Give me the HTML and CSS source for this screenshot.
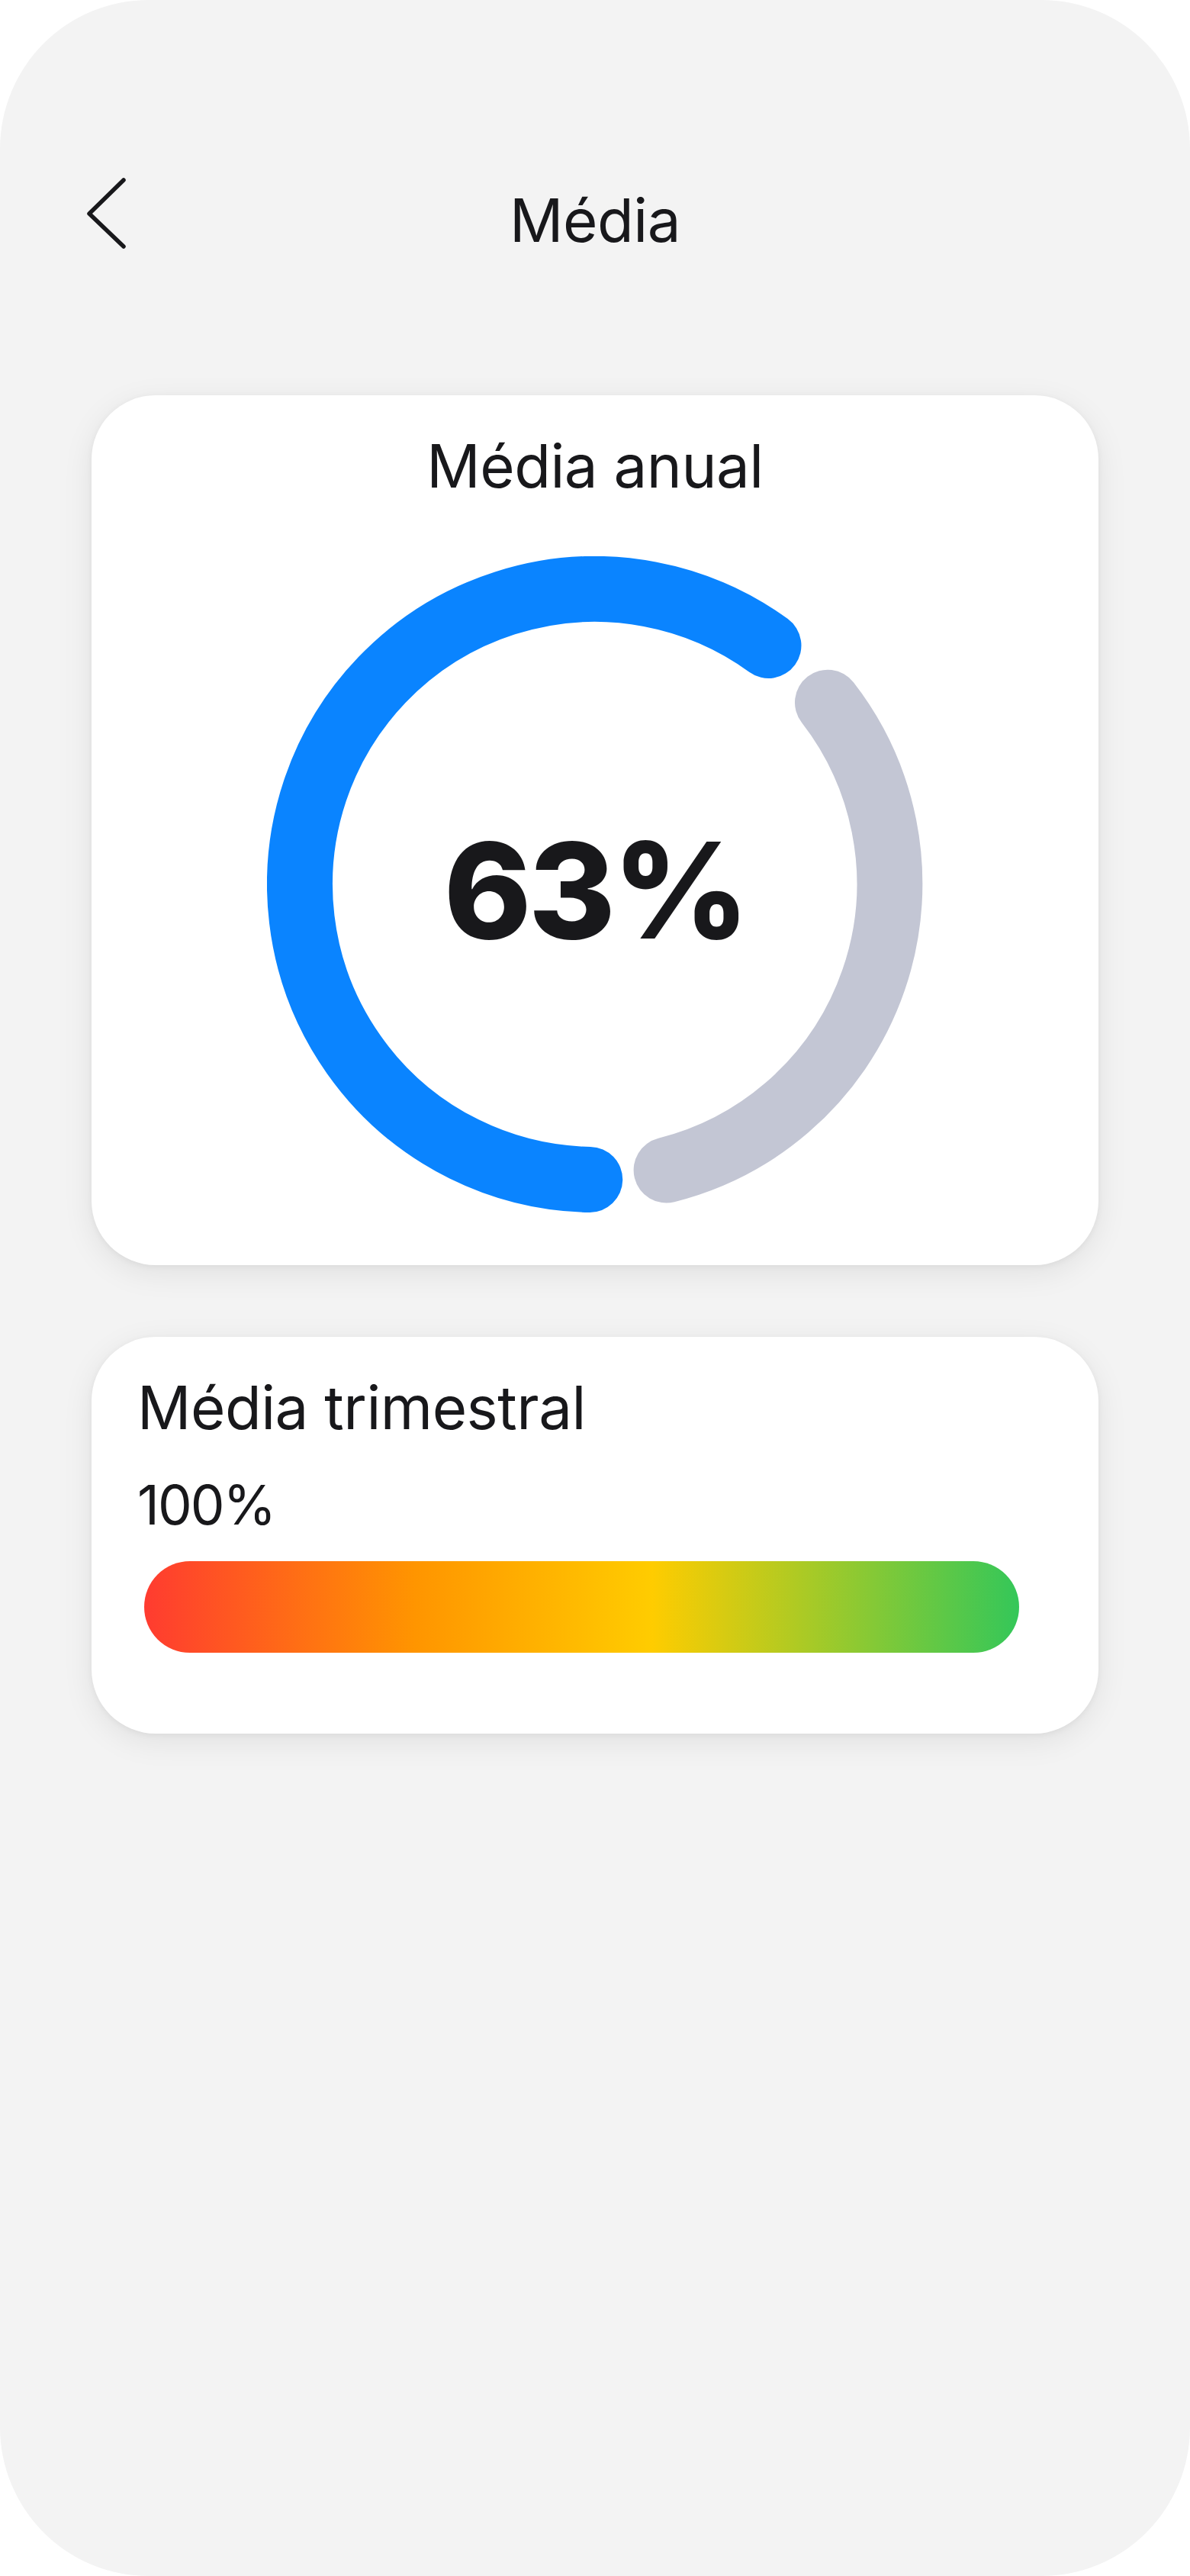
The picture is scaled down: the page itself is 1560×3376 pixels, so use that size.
FILE: index.html
```html
<!DOCTYPE html>
<html lang="pt">
<head>
<meta charset="utf-8">
<title>Média</title>
<link rel="stylesheet" href="styles.css">
</head>
<body>
<div class="phone">
  <header class="topbar">
    <button class="back" aria-label="Voltar">
      <svg class="back-icon" width="56" height="96" viewBox="0 0 56 96"><polyline points="50,4 5,48 50,91" fill="none" stroke="#18181b" stroke-width="5.5" stroke-linecap="round" stroke-linejoin="round"/></svg>
    </button>
    <h1 class="topbar-title">Média</h1>
    <span class="topbar-spacer"></span>
  </header>

  <main class="content">
    <section class="card card-annual">
      <h2 class="card-title centered">Média anual</h2>
      <div class="ring">
        <svg class="ring-svg" width="860" height="860" viewBox="0 0 860 860">
          <path d="M 423.25 816.94 A 387 387 0 1 1 657.47 116.91" fill="none" stroke="#0a84ff" stroke-width="86" stroke-linecap="round"/>
          <path d="M 734.96 191.74 A 387 387 0 0 1 523.62 804.51" fill="none" stroke="#c3c6d4" stroke-width="86" stroke-linecap="round"/>
        </svg>
        <div class="ring-value">63%</div>
      </div>
    </section>

    <section class="card card-quarter">
      <h2 class="card-title">Média trimestral</h2>
      <div class="quarter-value">100%</div>
      <div class="bar"></div>
    </section>
  </main>
</div>
</body>
</html>
```
FILE: styles.css
```css
* { box-sizing: border-box; }
html, body { margin: 0; padding: 0; background: #ffffff; }
body { font-family: Inter, "Liberation Sans", sans-serif; color: #18181b; }

.phone {
  width: 1560px;
  height: 3376px;
  background: #f3f3f3;
  border-radius: 195px;
  overflow: hidden;
  padding-top: 239px;
}

.topbar {
  display: grid;
  grid-template-columns: 1fr auto 1fr;
  align-items: center;
  height: 100px;
}
.back {
  justify-self: start;
  align-self: start;
  margin-top: -7px;
  margin-left: 112px;
  padding: 0;
  border: 0;
  background: none;
  width: 56px;
  height: 96px;
}
.back-icon { display: block; }
.topbar-title {
  margin: 0;
  font-size: 78px;
  line-height: 1;
  font-weight: 400;
  letter-spacing: -0.5px;
}

.content {
  display: flex;
  flex-direction: column;
  gap: 94px;
  padding: 179px 120px 0;
}

.card {
  background: #ffffff;
  border-radius: 84px;
  box-shadow: 0 10px 40px rgba(0, 0, 0, 0.08), 0 2px 8px rgba(0, 0, 0, 0.05);
}

.card-title {
  margin: 0;
  font-size: 78px;
  line-height: 1;
  font-weight: 400;
  letter-spacing: -0.5px;
}
.centered { text-align: center; }

.card-annual {
  height: 1140px;
  padding: 54px 0 0;
  display: flex;
  flex-direction: column;
  align-items: center;
}
.ring {
  margin-top: 79px;
  display: grid;
  place-items: center;
}
.ring-svg, .ring-value { grid-area: 1 / 1; }
.ring-svg { display: block; }
.ring-value {
  font-size: 174px;
  font-weight: 800;
  line-height: 1;
  letter-spacing: -4px;
  margin-top: 16px;
}

.card-quarter {
  height: 520px;
  padding: 54px 0 0 60px;
}
.quarter-value {
  margin-top: 53px;
  font-size: 71px;
  line-height: 1;
  font-weight: 400;
  letter-spacing: -2px;
}
.bar {
  margin-top: 38px;
  margin-left: 9px;
  width: 1147px;
  height: 120px;
  border-radius: 60px;
  background: linear-gradient(90deg, #ff3b30 0%, #ff9500 31%, #ffcc00 58%, #34c759 100%);
}
```
